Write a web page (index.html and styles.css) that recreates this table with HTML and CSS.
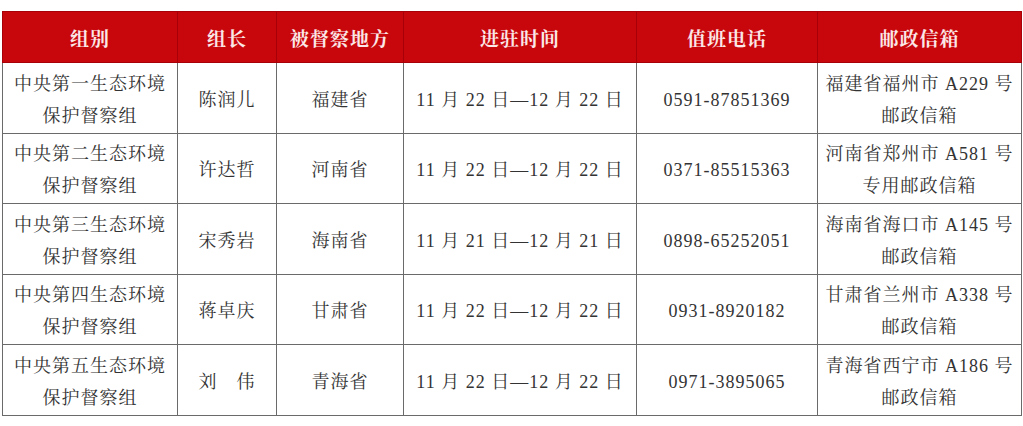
FILE: index.html
```html
<!DOCTYPE html>
<html lang="zh">
<head>
<meta charset="utf-8">
<link rel="stylesheet" href="styles.css">
</head>
<body>
<table class="grid">
  <colgroup>
    <col class="c1"><col class="c2"><col class="c3"><col class="c4"><col class="c5"><col class="c6">
  </colgroup>
  <thead>
    <tr><th>组别</th><th>组长</th><th>被督察地方</th><th>进驻时间</th><th>值班电话</th><th>邮政信箱</th></tr>
  </thead>
  <tbody>
    <tr><td>中央第一生态环境<br>保护督察组</td><td>陈润儿</td><td>福建省</td><td>11 月 22 日—12 月 22 日</td><td>0591-87851369</td><td>福建省福州市 A229 号<br>邮政信箱</td></tr>
    <tr><td>中央第二生态环境<br>保护督察组</td><td>许达哲</td><td>河南省</td><td>11 月 22 日—12 月 22 日</td><td>0371-85515363</td><td>河南省郑州市 A581 号<br>专用邮政信箱</td></tr>
    <tr><td>中央第三生态环境<br>保护督察组</td><td>宋秀岩</td><td>海南省</td><td>11 月 21 日—12 月 21 日</td><td>0898-65252051</td><td>海南省海口市 A145 号<br>邮政信箱</td></tr>
    <tr><td>中央第四生态环境<br>保护督察组</td><td>蒋卓庆</td><td>甘肃省</td><td>11 月 22 日—12 月 22 日</td><td>0931-8920182</td><td>甘肃省兰州市 A338 号<br>邮政信箱</td></tr>
    <tr><td>中央第五生态环境<br>保护督察组</td><td>刘　伟</td><td>青海省</td><td>11 月 22 日—12 月 22 日</td><td>0971-3895065</td><td>青海省西宁市 A186 号<br>邮政信箱</td></tr>
  </tbody>
</table>
</body>
</html>
```
FILE: styles.css
```css
html, body {
  margin: 0;
  background: #ffffff;
}
body {
  padding: 11px 0 0 2px;
  font-family: "Liberation Serif", "Noto Serif CJK SC", "Noto Sans CJK SC", serif;
  color: #333333;
}
.grid {
  border-collapse: collapse;
  table-layout: fixed;
  width: 1019px;
}
.c1 { width: 175px; }
.c2 { width: 99px; }
.c3 { width: 127px; }
.c4 { width: 233px; }
.c5 { width: 181px; }
.c6 { width: 204px; }
.grid th {
  background: #c8070d;
  color: #fbe7e7;
  font-size: 19px;
  font-weight: bold;
  letter-spacing: 1px;
  height: 50px;
  padding: 0;
  border: 1px solid #a80008;
  text-align: center;
  vertical-align: middle;
}
.grid td {
  padding: 4.5px 0 1px 0;
  font-size: 18px;
  line-height: 32px;
  letter-spacing: 1px;
  text-align: center;
  vertical-align: middle;
  border: 1px solid #6a6a6a;
  color: #333333;
}
```
